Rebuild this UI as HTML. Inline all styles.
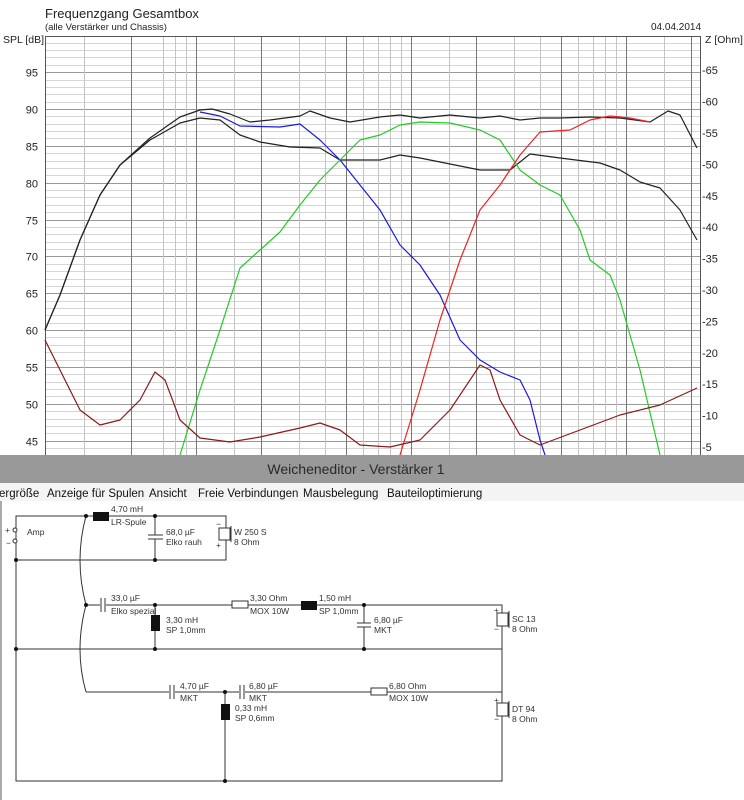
<!DOCTYPE html>
<html><head><meta charset="utf-8"><style>
html,body{margin:0;padding:0;background:#fff;width:744px;height:800px;overflow:hidden}
svg{display:block;font-family:"Liberation Sans",sans-serif}
</style></head><body>
<svg id="s" width="744" height="800" viewBox="0 0 744 800" xmlns="http://www.w3.org/2000/svg">
<rect width="744" height="800" fill="#fff"/>
<g id="grid"></g>
<text x="45" y="18" font-size="13" fill="#222">Frequenzgang Gesamtbox</text>
<text x="45" y="30" font-size="9.5" fill="#222">(alle Verstärker und Chassis)</text>
<text x="651" y="30" font-size="10" fill="#222">04.04.2014</text>
<text x="3" y="43" font-size="10.5" fill="#222">SPL [dB]</text>
<text x="705" y="43" font-size="10.5" fill="#222">Z [Ohm]</text>
<g id="lab" font-size="11" fill="#222"></g>
<g fill="none" stroke-width="1.2" stroke-linejoin="round">
<path stroke="#222" d="M45,330 L60,295 L80,240 L100,195 L120,165 L150,138 L180,117 L200,110 L212,109 L230,114 L250,122 L270,120 L300,116 L310,111 L330,118 L350,122 L380,117 L400,115 L420,118 L450,115 L480,118 L500,116 L520,120 L540,118 L560,118 L590,117 L620,118 L650,122 L668,111 L680,115 L697,148"/>
<path stroke="#222" d="M45,330 L60,295 L80,240 L100,195 L120,165 L150,140 L180,123 L200,118 L220,120 L240,135 L260,142 L290,147 L320,148 L340,160 L360,160 L380,160 L400,155 L420,158 L450,164 L480,170 L510,170 L530,154 L560,158 L600,163 L620,170 L640,182 L660,188 L680,210 L697,240"/>
<path stroke="#1a1add" d="M200,112 L220,116 L240,126 L280,127 L300,124 L320,140 L340,160 L360,185 L380,210 L400,245 L420,265 L440,295 L460,340 L480,360 L500,372 L520,380 L530,400 L540,440 L545,455"/>
<path stroke="#22cc22" d="M180,455 L200,390 L220,330 L240,268 L260,250 L280,232 L300,205 L320,180 L340,160 L360,140 L380,135 L400,125 L420,122 L450,123 L480,130 L500,140 L520,170 L540,185 L560,195 L580,230 L590,260 L610,275 L620,300 L640,370 L660,455"/>
<path stroke="#ee2222" d="M400,455 L420,390 L440,320 L460,260 L480,210 L500,185 L520,155 L540,132 L570,130 L590,120 L610,116 L630,118 L650,122"/>
<path stroke="#8b1a1a" d="M45,340 L60,370 L80,410 L100,425 L120,420 L140,400 L155,372 L165,380 L180,420 L200,438 L230,442 L260,437 L300,428 L320,423 L340,430 L360,445 L390,447 L420,440 L450,410 L480,365 L490,370 L500,400 L520,435 L540,445 L580,430 L620,415 L660,405 L697,388"/>
</g>
<rect x="0" y="455" width="744" height="28" fill="#999"/>
<text x="356" y="474" font-size="14" fill="#2a2a2a" text-anchor="middle">Weicheneditor - Verstärker 1</text>
<rect x="0" y="483" width="744" height="18" fill="#f4f4f4"/>
<g font-size="11.5" fill="#111">
<text x="-1" y="497">ergröße</text><text x="47" y="497">Anzeige für Spulen</text><text x="149" y="497">Ansicht</text><text x="198" y="497">Freie Verbindungen</text><text x="303" y="497">Mausbelegung</text><text x="387" y="497">Bauteiloptimierung</text>
</g>
<rect x="0" y="501" width="2" height="299" fill="#aaa"/>
<g stroke="#333" stroke-width="1" fill="none">
<path d="M16,516 H226 V560 H16 Z"/>
<path d="M16,560 V781 H502 V605 H86"/>
<path d="M16,649 H502"/>
<path d="M86,692 H502 V781"/>
<path d="M86,516 Q74,560 86,605 Q74,650 86,692"/>
<path d="M155,516 V535 M155,539 V560 M364,605 V623 M364,627 V649 M155,605 V649 M225,692 V781"/>
<path d="M148,535 H163 M148,539 H163 M357,623 H371 M357,627 H371"/>
</g>
<rect x="100" y="603" width="6" height="4" fill="#fff"/>
<rect x="169" y="690" width="6" height="4" fill="#fff"/>
<rect x="239" y="690" width="6" height="4" fill="#fff"/>
<g stroke="#333" stroke-width="1"><path d="M101,598 V612 M105,598 V612 M170,685 V699 M174,685 V699 M240,685 V699 M244,685 V699"/></g>
<g fill="#111">
<rect x="93" y="512" width="16" height="9"/><rect x="151" y="615" width="9" height="16"/><rect x="301" y="601" width="16" height="9"/><rect x="221" y="704" width="9" height="16"/>
<circle cx="86" cy="516" r="2"/><circle cx="155" cy="516" r="2"/><circle cx="155" cy="560" r="2"/><circle cx="16" cy="560" r="2"/>
<circle cx="86" cy="605" r="2"/><circle cx="155" cy="605" r="2"/><circle cx="364" cy="605" r="2"/><circle cx="16" cy="649" r="2"/><circle cx="155" cy="649" r="2"/><circle cx="364" cy="649" r="2"/>
<circle cx="225" cy="692" r="2"/><circle cx="225" cy="781" r="2"/>
</g>
<g stroke="#333" fill="#fff">
<rect x="232" y="601" width="16" height="7"/><rect x="371" y="688" width="16" height="7"/>
<rect x="219" y="528" width="11" height="12"/><rect x="497" y="613" width="11" height="13"/><rect x="497" y="703" width="11" height="13"/>
<path d="M231,526 V542 M509,611 V628 M509,701 V718" fill="none"/>
<circle cx="15" cy="530" r="2"/><circle cx="15" cy="541" r="2"/>
</g>
<g font-size="8.5" fill="#333">
<text x="5" y="533">+</text><text x="6" y="546">−</text><text x="27" y="535">Amp</text>
<text x="111" y="512">4,70 mH</text><text x="111" y="525">LR-Spule</text>
<text x="166" y="535">68,0 µF</text><text x="166" y="545">Elko rauh</text>
<text x="234" y="535">W 250 S</text><text x="234" y="545">8 Ohm</text>
<text x="111" y="601">33,0 µF</text><text x="111" y="614">Elko spezial</text>
<text x="166" y="623">3,30 mH</text><text x="166" y="633">SP 1,0mm</text>
<text x="250" y="601">3,30 Ohm</text><text x="250" y="614">MOX 10W</text>
<text x="319" y="601">1,50 mH</text><text x="319" y="614">SP 1,0mm</text>
<text x="374" y="623">6,80 µF</text><text x="374" y="633">MKT</text>
<text x="512" y="622">SC 13</text><text x="512" y="632">8 Ohm</text>
<text x="180" y="689">4,70 µF</text><text x="180" y="701">MKT</text>
<text x="249" y="689">6,80 µF</text><text x="249" y="701">MKT</text>
<text x="235" y="711">0,33 mH</text><text x="235" y="721">SP 0,6mm</text>
<text x="389" y="689">6,80 Ohm</text><text x="389" y="701">MOX 10W</text>
<text x="512" y="712">DT 94</text><text x="512" y="722">8 Ohm</text>
<text x="494" y="613">+</text><text x="494" y="632">−</text><text x="494" y="703">+</text><text x="494" y="722">−</text>
<text x="216" y="527">−</text><text x="216" y="548">+</text>
</g>
</svg>
<script>
var ns="http://www.w3.org/2000/svg",g=document.getElementById("grid"),lab=document.getElementById("lab");
function L(x1,y1,x2,y2,c){var l=document.createElementNS(ns,"line");l.setAttribute("x1",x1);l.setAttribute("y1",y1);l.setAttribute("x2",x2);l.setAttribute("y2",y2);l.setAttribute("stroke",c);l.setAttribute("stroke-width",1);g.appendChild(l);}
function T(x,y,s,a){var t=document.createElementNS(ns,"text");t.setAttribute("x",x);t.setAttribute("y",y);if(a)t.setAttribute("text-anchor",a);t.textContent=s;lab.appendChild(t);}
var X0=45,X1=700,Y0=36,Y1=455;
for(var d=44;d<=99;d++){var y=Math.round(109+(90-d)*7.37)+.5;if(y<Y0||y>Y1)continue;L(X0,y,X1,y,d%5==0?"#999":"#d6d6d6");if(d%5==0&&d<=95)T(38,y+4,d,"end");}
var fs=[30,50,70,80,90,100,150,200,300,400,500,600,700,800,900,1000,1500,2000,3000,4000,5000,6000,7000,8000,9000,10000,15000,20000];
var dark={50:1,100:1,200:1,500:1,1000:1,2000:1,5000:1,10000:1,20000:1};
fs.forEach(function(f){var x=Math.round(196+215*Math.log10(f/100))+.5;if(x<X0-1||x>X1+1)return;L(x,Y0,x,Y1,dark[f]?"#777":"#c4c4c4");});
L(X0+.5,Y0,X0+.5,Y1,"#555");L(X1+.5,Y0,X1+.5,Y1,"#555");L(X0,Y0+.5,X1,Y0+.5,"#555");
for(var z=5;z<=65;z+=5){var y=447-(z-5)*6.28;T(702,y+4,"-"+z);}
</script>
</body></html>
